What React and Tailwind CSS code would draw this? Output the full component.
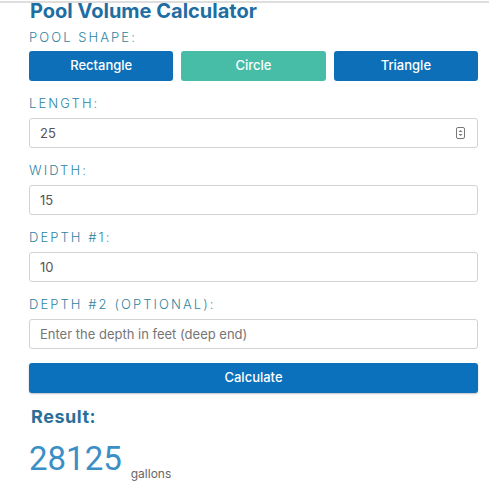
import { useState } from "react";

function Field({ label, value, placeholder, spinner }) {
  return (
    <div className="mt-[12px]">
      <label className="block text-[13px] leading-[20px] font-light tracking-[0.16em] text-[#2d84a2]">
        {label}
      </label>
      <div className="relative mt-[5px]">
        <input
          defaultValue={value}
          placeholder={placeholder}
          className="block w-full h-[30px] rounded-[3px] border border-[#d2d2d2] bg-white pl-[10px] pr-8 text-[13px] text-[#555] placeholder:text-[#757575] outline-none"
        />
        {spinner && (
          <svg
            width="9"
            height="12"
            viewBox="0 0 9 12"
            className="absolute right-[13px] top-[9px]"
          >
            <rect x="0.5" y="0.5" width="8" height="11" rx="1.5" fill="#fff" stroke="#777" />
            <path d="M2.5 5 L4.5 3 L6.5 5 Z" fill="#777" />
            <path d="M2.5 7 L4.5 9 L6.5 7 Z" fill="#777" />
          </svg>
        )}
      </div>
    </div>
  );
}

export default function App() {
  const [shape, setShape] = useState("Circle");
  const shapes = ["Rectangle", "Circle", "Triangle"];

  return (
    <div className="w-[489px] h-[484px] bg-white overflow-hidden" style={{ fontFamily: "Inter, 'Noto Sans', sans-serif" }}>
      <div className="h-px" />
      <div className="h-[2px] bg-[#dedede]" />

      <div className="pl-[29px] pr-[11px]">
        <h1 className="pl-px text-[20px] leading-[16px] font-bold text-[#1f6ea3]">
          Pool Volume Calculator
        </h1>

        <div className="mt-[8px] text-[13px] leading-[20px] font-light tracking-[0.16em] text-[#2d84a2]">
          POOL SHAPE:
        </div>

        <div className="mt-[4px] grid grid-cols-3 gap-2">
          {shapes.map((s) => (
            <button
              key={s}
              onClick={() => setShape(s)}
              className={
                "h-[30px] rounded-[3px] text-[13px] font-medium text-white " +
                (shape === s ? "bg-[#47bca6]" : "bg-[#0c6fb8]")
              }
            >
              {s}
            </button>
          ))}
        </div>

        <Field label="LENGTH:" value="25" spinner />
        <Field label="WIDTH:" value="15" />
        <Field label="DEPTH #1:" value="10" />
        <Field label="DEPTH #2 (OPTIONAL):" placeholder="Enter the depth in feet (deep end)" />

        <button className="mt-[14px] block w-full h-[30px] rounded-[3px] bg-[#0b71bc] text-[13px] font-medium text-white shadow-[0_1px_2px_rgba(0,0,0,0.25)]">
          Calculate
        </button>

        <div className="mt-[12px] pl-[2px] text-[18px] leading-[24px] font-bold tracking-[0.03em] text-[#2a6f98]">
          Result:
        </div>

        <div className="mt-[10px] flex items-end">
          <span
            className="inline-block border-b border-[#cfcfcf] pb-[5px] text-[33px] leading-[40px] text-[#3b8fc6]"
            style={{ fontFamily: "Roboto, 'Liberation Sans', sans-serif" }}
          >
            28125
          </span>
          <span className="ml-[9px] mb-[3px] text-[12px] leading-[16px] text-[#666]">gallons</span>
        </div>
      </div>
    </div>
  );
}
